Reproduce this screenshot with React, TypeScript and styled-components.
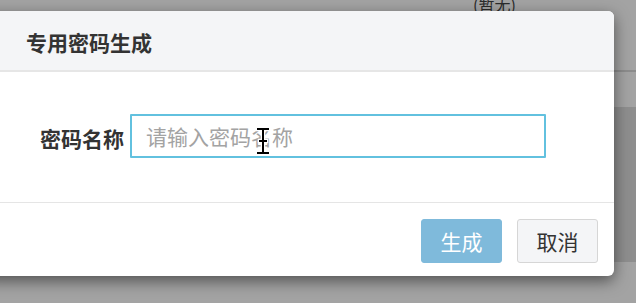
import React from "react";
import styled, { createGlobalStyle } from "styled-components";

const GlobalStyle = createGlobalStyle`
  html, body { margin: 0; padding: 0; background: #fff; }
  body { font-family: "Noto Sans CJK SC", "Noto Sans", sans-serif; }
  * { box-sizing: border-box; }
`;

const Page = styled.div`
  position: relative;
  width: 636px;
  height: 303px;
  overflow: hidden;
  background: #fff;
`;

const BgTable = styled.div`
  display: flex;
  flex-direction: column;
`;

const BgHeadRow = styled.div`
  height: 72px;
  border-bottom: 2px solid #dcdcdc;
  padding-left: 473px;
`;

const BgCellText = styled.div`
  margin-top: -6px;
  font-size: 16px;
  line-height: 20px;
  color: #444;
`;

const BgRow = styled.div<{ $h: number; $shade?: boolean }>`
  height: ${(p) => p.$h}px;
  background: ${(p) => (p.$shade ? "#dedede" : "#fff")};
`;

const Overlay = styled.div`
  position: absolute;
  inset: 0;
  background: rgba(0, 0, 0, 0.36);
`;

const Modal = styled.div`
  position: absolute;
  top: 11px;
  left: -20px;
  width: 634px;
  background: #fff;
  border-radius: 6px;
  box-shadow: 0 5px 15px rgba(0, 0, 0, 0.5);
  display: flex;
  flex-direction: column;
`;

const Header = styled.div`
  height: 61px;
  background: #f4f5f7;
  border-bottom: 2px solid #e6e6e6;
  border-radius: 6px 6px 0 0;
  display: flex;
  align-items: center;
  padding: 3px 0 0 46px;
`;

const Title = styled.h4`
  margin: 0;
  font-size: 21px;
  line-height: 28px;
  font-weight: 700;
  color: #333;
`;

const Body = styled.div`
  padding: 42px 0 44px 60px;
`;

const FieldRow = styled.div`
  display: flex;
  align-items: center;
  gap: 6px;
`;

const Label = styled.label`
  font-size: 21px;
  line-height: 28px;
  font-weight: 700;
  color: #333;
  padding-top: 3px;
`;

const InputWrap = styled.div`
  position: relative;
`;

const TextInput = styled.input`
  width: 416px;
  height: 44px;
  border: 2px solid #62c1df;
  border-radius: 1px;
  padding: 0 14px;
  font-family: inherit;
  font-size: 21px;
  color: #333;
  outline: none;
  background: #fff;
  &::placeholder { color: #a3a3a3; }
`;

const Cursor = styled.svg`
  position: absolute;
  left: 125px;
  top: 12px;
  pointer-events: none;
`;

const Footer = styled.div`
  border-top: 1px solid #e5e5e5;
  padding: 16px 16px 13px 0;
  display: flex;
  justify-content: flex-end;
  gap: 15px;
`;

const Button = styled.button<{ $primary?: boolean }>`
  width: 81px;
  height: 44px;
  border-radius: 3px;
  font-family: inherit;
  font-size: 21px;
  line-height: 28px;
  padding: 0;
  cursor: pointer;
  border: 1px solid ${(p) => (p.$primary ? "#7fbadb" : "#d6d6d6")};
  background: ${(p) => (p.$primary ? "#7fbadb" : "#f4f5f7")};
  color: ${(p) => (p.$primary ? "#fff" : "#333")};
`;

export default function App() {
  return (
    <>
      <GlobalStyle />
      <Page>
        <BgTable>
          <BgHeadRow>
            <BgCellText>(暂无)</BgCellText>
          </BgHeadRow>
          <BgRow $h={35} />
          <BgRow $h={155} $shade />
          <BgRow $h={40} />
        </BgTable>
        <Overlay />
        <Modal>
          <Header>
            <Title>专用密码生成</Title>
          </Header>
          <Body>
            <FieldRow>
              <Label>密码名称</Label>
              <InputWrap>
                <TextInput placeholder="请输入密码名称" />
                <Cursor width="16" height="30" viewBox="0 0 16 30">
                  <g fill="none" stroke="#fff" strokeWidth="4.5" strokeLinecap="square">
                    <path d="M3 3 H13 M8 3 V27 M3 27 H13 M5 15 H11" />
                  </g>
                  <g fill="none" stroke="#000" strokeWidth="2" strokeLinecap="square">
                    <path d="M3 3 H13 M8 3 V27 M3 27 H13 M5 15 H11" />
                  </g>
                </Cursor>
              </InputWrap>
            </FieldRow>
          </Body>
          <Footer>
            <Button $primary>生成</Button>
            <Button>取消</Button>
          </Footer>
        </Modal>
      </Page>
    </>
  );
}
